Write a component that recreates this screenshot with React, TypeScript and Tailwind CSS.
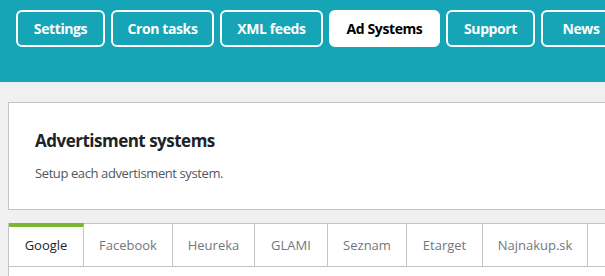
import React from "react";

const navItems = ["Settings", "Cron tasks", "XML feeds", "Ad Systems", "Support", "News"];
const navWidths = ["w-[89px]", "w-[103px]", "w-[103px]", "w-[111px]", "w-[89px]", "w-[80px]"];

const tabs = [
  { label: "Google", w: "w-[75px]" },
  { label: "Facebook", w: "w-[89px]" },
  { label: "Heureka", w: "w-[82px]" },
  { label: "GLAMI", w: "w-[73px]" },
  { label: "Seznam", w: "w-[79px]" },
  { label: "Etarget", w: "w-[76px]" },
  { label: "Najnakup.sk", w: "w-[105px]" },
];

const App: React.FC = () => {
  return (
    <div className="w-[605px] h-[276px] overflow-hidden bg-[#f0f0f1] font-['Open_Sans','Noto_Sans',sans-serif]">
      {/* top navigation */}
      <div className="h-[82px] bg-[#16a4b7] pl-4 pt-[10px] flex gap-[6px] overflow-hidden">
        {navItems.map((item, i) => {
          const active = item === "Ad Systems";
          return (
            <div
              key={item}
              className={`${navWidths[i]} shrink-0 h-[37px] rounded-[6px] border-2 flex items-center justify-center text-[14px] font-bold tracking-[-0.4px] ${
                active ? "bg-white border-white text-black" : "border-white text-white"
              }`}
            >
              {item}
            </div>
          );
        })}
      </div>

      <div className="pl-2 pt-5">
        {/* card */}
        <div className="h-[108px] bg-white border border-[#c3c4c7] border-r-0 pl-[26px] pt-[25px]">
          <h2 className="text-[17px] font-bold text-[#1d2327] leading-[26px] tracking-[-0.5px]">Advertisment systems</h2>
          <p className="mt-[10px] text-[13px] text-[#50575e] leading-[18px] tracking-[-0.4px]">Setup each advertisment system.</p>
        </div>

        {/* tabs */}
        <div className="mt-[13px] flex border-l border-[#c3c4c7] border-b h-[44px]">
          {tabs.map((t, i) => (
            <div
              key={t.label}
              className={`${t.w} shrink-0 flex items-center justify-center text-[13px] border-r border-[#c3c4c7] ${
                i === 0
                  ? "bg-white border-t-4 border-t-[#7cb82f] text-[#1d2327] pb-[1px]"
                  : "bg-white border-t text-[#72777c] pt-[2px]"
              }`}
            >
              {t.label}
            </div>
          ))}
          <div className="flex-1 bg-white border-t border-[#c3c4c7]" />
        </div>
        <div className="h-[10px] bg-white border-l border-[#c3c4c7]" />
      </div>
    </div>
  );
};

export default App;
